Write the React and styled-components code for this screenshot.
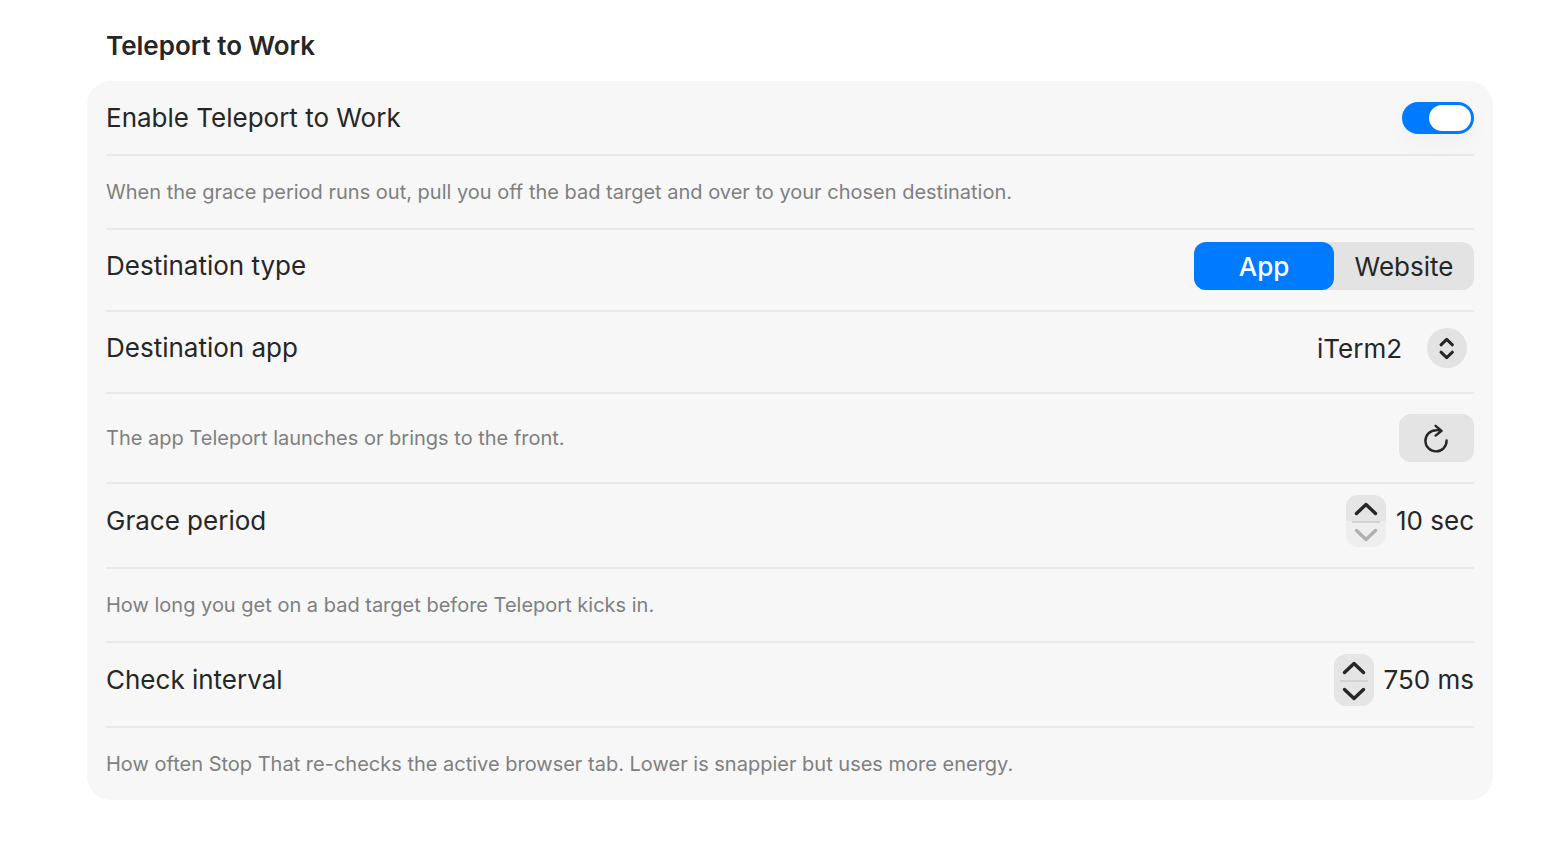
import React, { useState } from "react";
import styled, { createGlobalStyle } from "styled-components";

const GlobalStyle = createGlobalStyle`
  * { box-sizing: border-box; }
  body {
    margin: 0;
    background: #ffffff;
    color: #262626;
    font-family: Inter, "Liberation Sans", sans-serif;
    font-size: 26px;
    line-height: 32px;
  }
  button, select, input { font: inherit; color: inherit; margin: 0; }
`;

const Page = styled.main`
  padding: 30px 65px 48px 87px;
`;

const Heading = styled.h1`
  margin: 0 0 19px;
  padding: 0 19px;
  font-size: 26px;
  line-height: 32px;
  font-weight: 600;
`;

const Panel = styled.section`
  padding: 0 19px;
  background: #f7f7f7;
  border-radius: 24px;
`;

const Row = styled.div`
  display: flex;
  align-items: center;
  justify-content: space-between;
  height: ${(p) => p.$height}px;
  padding-bottom: ${(p) => p.$lift || 0}px;
  border-bottom: 2px solid #e9e9e9;
  &:last-child { border-bottom: 0; }
`;

const Label = styled.label``;

const Hint = styled.p`
  margin: 0;
  font-size: 20px;
  line-height: 24px;
  color: #7f7f7f;
`;

const Switch = styled.input`
  appearance: none;
  display: flex;
  width: 72px;
  height: 32px;
  padding: 3px;
  border-radius: 16px;
  background: #d5d5d5;
  box-shadow: 0 8px 24px rgba(0, 0, 0, 0.03);
  &::before {
    content: "";
    width: 42px;
    height: 26px;
    border-radius: 13px;
    background: #ffffff;
  }
  &:checked { background: #007aff; justify-content: flex-end; }
`;

const Segments = styled.div`
  display: flex;
  width: 280px;
  height: 48px;
  border-radius: 12px;
  background: #e3e3e3;
`;

const Segment = styled.button`
  flex: 1;
  padding: 2px 0 0;
  border: 0;
  border-radius: 12px;
  background: ${(p) => (p.$active ? "#007aff" : "transparent")};
  color: ${(p) => (p.$active ? "#ffffff" : "#262626")};
  font-weight: ${(p) => (p.$active ? 500 : 400)};
`;

const Picker = styled.div`
  display: grid;
  align-items: center;
  padding-right: 7px;
  > * { grid-area: 1 / 1; }
`;

const PickerSelect = styled.select`
  appearance: none;
  border: 0;
  padding: 2px 64px 0 0;
  background: transparent;
`;

const PickerKnob = styled.span`
  display: grid;
  place-items: center;
  justify-self: end;
  width: 40px;
  height: 40px;
  border-radius: 50%;
  background: #e3e3e3;
  pointer-events: none;
`;

const Refresh = styled.button`
  display: grid;
  place-items: center;
  width: 75px;
  height: 48px;
  padding: 0;
  border: 0;
  border-radius: 12px;
  background: #e4e4e4;
`;

const StepperGroup = styled.div`
  display: flex;
  align-items: center;
  gap: 10px;
`;

const Stepper = styled.div`
  display: grid;
  grid-template-rows: 1fr 1fr;
  width: 40px;
  height: 52px;
  border-radius: 12px;
  overflow: hidden;
`;

const Step = styled.button`
  display: grid;
  place-items: center;
  padding: 0;
  border: 0;
  background: #e5e5e5;
  color: #262626;
  &:disabled { color: #b0b0b0; background: #eeeeee; }
  & + &::before {
    content: "";
    width: 28px;
    height: 2px;
    background: #d2d2d2;
  }
  & + & { grid-template-rows: 2px 1fr; }
`;

const Line = styled.svg`
  display: block;
  fill: none;
  stroke: currentColor;
  stroke-width: ${(p) => p.$weight || 3};
  stroke-linecap: round;
  stroke-linejoin: round;
`;

function StepperField({ id, label, value, unit, step, min, onChange }) {
  return (
    <StepperGroup role="group" aria-labelledby={id}>
      <Stepper>
        <Step aria-label={`Increase ${label}`} onClick={() => onChange(value + step)}>
          <Line width="24" height="16" viewBox="0 0 24 16" $weight={3.4}><path d="M2.5 13.5 12 4.5l9.5 9" /></Line>
        </Step>
        <Step aria-label={`Decrease ${label}`} disabled={value <= min} onClick={() => onChange(value - step)}>
          <Line width="24" height="16" viewBox="0 0 24 16" $weight={3.4}><path d="m2.5 3.5 9.5 9 9.5-9" /></Line>
        </Step>
      </Stepper>
      <output>{value} {unit}</output>
    </StepperGroup>
  );
}

export default function App() {
  const [enabled, setEnabled] = useState(true);
  const [type, setType] = useState("App");
  const [grace, setGrace] = useState(10);
  const [interval, setInterval] = useState(750);

  return (
    <>
      <GlobalStyle />
      <Page>
        <Heading>Teleport to Work</Heading>
        <Panel>
          <Row $height={75}>
            <Label htmlFor="enable">Enable Teleport to Work</Label>
            <Switch id="enable" type="checkbox" role="switch" checked={enabled} onChange={(e) => setEnabled(e.target.checked)} />
          </Row>
          <Row $height={74}>
            <Hint>When the grace period runs out, pull you off the bad target and over to your chosen destination.</Hint>
          </Row>
          <Row $height={82} $lift={8}>
            <span id="type">Destination type</span>
            <Segments role="group" aria-labelledby="type">
              {["App", "Website"].map((name) => (
                <Segment key={name} $active={type === name} aria-pressed={type === name} onClick={() => setType(name)}>{name}</Segment>
              ))}
            </Segments>
          </Row>
          <Row $height={82} $lift={8}>
            <Label htmlFor="app">Destination app</Label>
            <Picker>
              <PickerSelect id="app" defaultValue="iTerm2"><option>iTerm2</option></PickerSelect>
              <PickerKnob>
                <Line width="18" height="24" viewBox="0 0 18 24" $weight={3}><path d="m3 8.8 5.7-5.4 5.7 5.4M3 16.2l5.7 5.4 5.7-5.4" /></Line>
              </PickerKnob>
            </Picker>
          </Row>
          <Row $height={90}>
            <Hint>The app Teleport launches or brings to the front.</Hint>
            <Refresh aria-label="Refresh app list">
              <Line width="29" height="30" viewBox="0 0 29 30" $weight={2.4}><path d="M24.6 17.4A10.6 10.6 0 1 1 14 7.2Q17 7 19.4 7.8M13.6 2.8l6 5-6 4.8" /></Line>
            </Refresh>
          </Row>
          <Row $height={85} $lift={10}>
            <span id="grace">Grace period</span>
            <StepperField id="grace" label="grace period" value={grace} unit="sec" step={5} min={10} onChange={setGrace} />
          </Row>
          <Row $height={74}>
            <Hint>How long you get on a bad target before Teleport kicks in.</Hint>
          </Row>
          <Row $height={85} $lift={10}>
            <span id="interval">Check interval</span>
            <StepperField id="interval" label="check interval" value={interval} unit="ms" step={50} min={100} onChange={setInterval} />
          </Row>
          <Row $height={72}>
            <Hint>How often Stop That re-checks the active browser tab. Lower is snappier but uses more energy.</Hint>
          </Row>
        </Panel>
      </Page>
    </>
  );
}
